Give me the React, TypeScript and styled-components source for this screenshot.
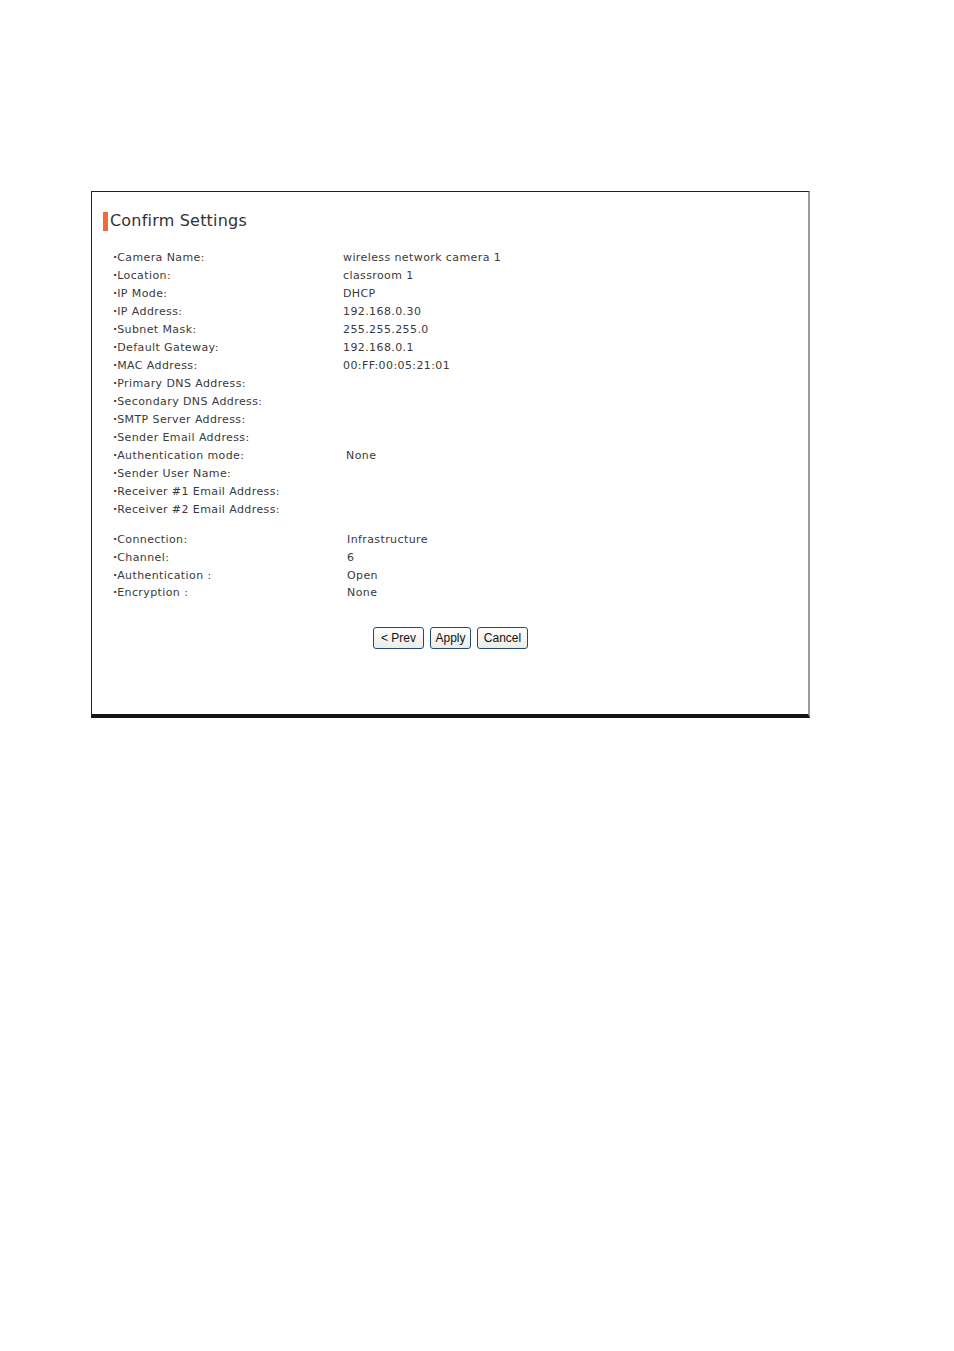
import React from 'react'
import styled, { createGlobalStyle } from 'styled-components'

const Global = createGlobalStyle`
    body {
        margin: 0;
        background: #ffffff;
        font-family: "DejaVu Sans", Verdana, sans-serif;
    }
`

const Page = styled.div`
    width: 954px;
    height: 1351px;
    padding: 191px 0 0 91px;
    box-sizing: border-box;
`

const Frame = styled.div`
    width: 719px;
    height: 527px;
    box-sizing: border-box;
    border-top: 1px solid #222;
    border-left: 1px solid #222;
    border-right: 2px solid #9a9a9a;
    border-bottom: 4px solid #151515;
    padding: 18px 0 0 11px;
    display: flex;
    flex-direction: column;
`

const Title = styled.h1`
    margin: 0;
    display: flex;
    align-items: center;
    gap: 2px;
    font-family: "DejaVu Sans", Verdana, sans-serif;
    font-weight: normal;
    font-size: 16px;
    letter-spacing: 0.2px;
    line-height: 22px;
    color: #333;

    &::before {
        content: '';
        width: 5px;
        height: 19px;
        background: #f26a3a;
    }
`

const Section = styled.div`
    margin-top: ${({ $gap }: { $gap: number }) => $gap}px;
    padding-left: 10px;
    display: flex;
    flex-direction: column;
`

const Row = styled.div<{ $offset: number; $h: number }>`
    display: grid;
    grid-template-columns: ${({ $offset }) => 230 + $offset}px 1fr;
    height: ${({ $h }) => $h}px;
    align-items: center;
    font-size: 11px;
    letter-spacing: 0.4px;
    color: #3a3a3a;
    white-space: nowrap;
`

const Label = styled.span`
    &::before {
        content: '·';
        font-weight: bold;
        letter-spacing: 0;
    }
`

const Actions = styled.div`
    margin-top: 25px;
    padding-left: 270px;
    display: flex;
    gap: 6px;
`

const Button = styled.button<{ $w: number }>`
    width: ${({ $w }) => $w}px;
    height: 22px;
    padding: 0;
    border: 1px solid #1f4a7a;
    border-radius: 3px;
    background: linear-gradient(#ffffff, #ecebe6);
    font-family: "Liberation Sans", Arial, sans-serif;
    font-size: 12px;
    color: #111;
`

type Item = [string, string, number?]

const network: Item[] = [
    ['Camera Name:', 'wireless network camera 1'],
    ['Location:', 'classroom 1'],
    ['IP Mode:', 'DHCP'],
    ['IP Address:', '192.168.0.30'],
    ['Subnet Mask:', '255.255.255.0'],
    ['Default Gateway:', '192.168.0.1'],
    ['MAC Address:', '00:FF:00:05:21:01'],
    ['Primary DNS Address:', ''],
    ['Secondary DNS Address:', ''],
    ['SMTP Server Address:', ''],
    ['Sender Email Address:', ''],
    ['Authentication mode:', 'None', 3],
    ['Sender User Name:', ''],
    ['Receiver #1 Email Address:', ''],
    ['Receiver #2 Email Address:', ''],
]

const wireless: Item[] = [
    ['Connection:', 'Infrastructure', 4],
    ['Channel:', '6', 4],
    ['Authentication :', 'Open', 4],
    ['Encryption :', 'None', 4],
]

const App = () => (
    <Page>
        <Global />
        <Frame>
            <Title>Confirm Settings</Title>
            <Section $gap={16}>
                {network.map(([label, value, off]) => (
                    <Row key={label} $offset={off ?? 0} $h={18}>
                        <Label>{label}</Label>
                        <span>{value}</span>
                    </Row>
                ))}
            </Section>
            <Section $gap={13}>
                {wireless.map(([label, value, off]) => (
                    <Row key={label} $offset={off ?? 0} $h={17.7}>
                        <Label>{label}</Label>
                        <span>{value}</span>
                    </Row>
                ))}
            </Section>
            <Actions>
                <Button $w={51}>&lt; Prev</Button>
                <Button $w={41}>Apply</Button>
                <Button $w={51}>Cancel</Button>
            </Actions>
        </Frame>
    </Page>
)

export default App
